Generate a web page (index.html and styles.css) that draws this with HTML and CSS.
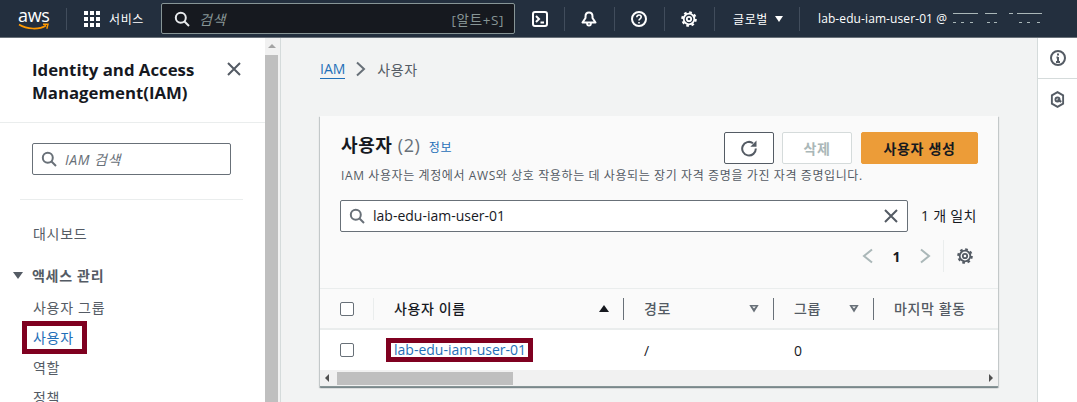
FILE: index.html
```html
<!DOCTYPE html>
<html lang="ko">
<head>
    <meta charset="UTF-8">
    <meta name="viewport" content="width=device-width, initial-scale=1.0">
    <title>IAM 사용자</title>
    <link rel="stylesheet" href="styles.css">
</head>
<body>
    <header class="topbar">
        <div class="aws-logo">
            <span class="aws-text">aws</span>
            <svg class="aws-smile" width="32" height="8" viewBox="0 0 32 8"><path d="M1 1.500C9 6.500 21 7 28 2.500" fill="none" stroke="#f90" stroke-width="1.600"/><path d="M25 1.200h5l-1.200 4.500" fill="none" stroke="#f90" stroke-width="1.400"/></svg>
        </div>
        <span class="top-sep sep-logo"></span>
        <svg class="grid-icon" width="16" height="16" viewBox="0 0 16 16" fill="#fff"><rect width="4" height="4"/><rect x="6" width="4" height="4"/><rect x="12" width="4" height="4"/><rect y="6" width="4" height="4"/><rect x="6" y="6" width="4" height="4"/><rect x="12" y="6" width="4" height="4"/><rect y="12" width="4" height="4"/><rect x="6" y="12" width="4" height="4"/><rect x="12" y="12" width="4" height="4"/></svg>
        <span class="services">서비스</span>
        <div class="top-search">
            <svg width="16" height="16" viewBox="0 0 16 16" fill="none" stroke="#e9ebed" stroke-width="2"><circle cx="6.800" cy="6.800" r="5"/><path d="M10.500 10.500l4.500 4.500"/></svg>
            <span class="top-search-text">검색</span>
            <span class="top-search-key">[알트+S]</span>
        </div>
        <div class="top-icon first">
            <svg width="16" height="16" viewBox="0 0 16 16" fill="none" stroke="#fff" stroke-width="2"><rect x="1" y="1" width="14" height="14" rx="2"/><path d="M4 5l3 3-3 3M8.500 11.500H12"/></svg>
        </div>
        <div class="top-icon">
            <svg width="16" height="16" viewBox="0 0 16 16" fill="none" stroke="#fff" stroke-width="2"><path d="M8 1.500c-2.200 0-3.500 1.800-3.500 4V7L1.500 11.500h13L11.500 7V5.500c0-2.200-1.300-4-3.500-4z" stroke-linejoin="round"/><path d="M6 12c0 1.600.9 2.700 2 2.700s2-1.100 2-2.700" stroke-width="1.800"/></svg>
        </div>
        <div class="top-icon">
            <svg width="16" height="16" viewBox="0 0 16 16" fill="none" stroke="#fff" stroke-width="2"><circle cx="8" cy="8" r="7"/><path d="M5.800 6.200c0-1.300 1-2.200 2.200-2.200s2.200.9 2.200 2.100c0 1.800-2.200 1.800-2.200 3.400" stroke-width="1.600"/><path d="M8 11v1.500" stroke-width="1.600"/></svg>
        </div>
        <div class="top-icon">
            <svg width="16" height="16" viewBox="0 0 16 16" fill="none" stroke="#fff"><circle cx="8" cy="8" r="2.200" stroke-width="1.800"/><circle cx="8" cy="8" r="5.300" stroke-width="1.800"/><circle cx="8" cy="8" r="6.700" stroke-width="2.200" stroke-dasharray="2.630 2.630"/></svg>
        </div>
        <div class="region">글로벌<span class="region-caret"></span></div>
        <div class="account"><span>lab-edu-iam-user-01 @</span>
            <svg width="92" height="11" viewBox="0 0 92 11" fill="none" stroke="#aab7b8"><path d="M0 .5h25M32 .5h12M56 .5h4M64 .5h25M0 9.500h3M8 9.500h3M17 9.500h3M34 9.500h3M41 9.500h3M66 9.500h3M74 9.500h3M84 9.500h3"/></svg>
        </div>
    </header>

    <div class="layout">
        <aside class="sidebar">
            <div class="side-head">
                <h2 class="side-title">Identity and Access Management(IAM)</h2>
                <svg class="side-close" width="16" height="16" viewBox="0 0 16 16" fill="none" stroke="#545b64" stroke-width="2"><path d="M2 2l12 12M14 2L2 14"/></svg>
            </div>
            <div class="side-search-wrap">
                <div class="side-search">
                    <svg width="16" height="16" viewBox="0 0 16 16" fill="none" stroke="#687078" stroke-width="2"><circle cx="6.800" cy="6.800" r="5"/><path d="M10.500 10.500l4.500 4.500"/></svg>
                    <span class="side-search-text">IAM 검색</span>
                </div>
            </div>
            <nav class="side-nav">
                <a class="side-link dashboard">대시보드</a>
                <div class="side-group"><span class="side-caret"></span>액세스 관리</div>
                <a class="side-link">사용자 그룹</a>
                <a class="side-link"><span class="mark side-mark">사용자</span></a>
                <a class="side-link">역할</a>
                <a class="side-link">정책</a>
            </nav>
        </aside>
        <div class="v-scroll">
            <span class="v-arrow"></span>
            <span class="v-thumb"></span>
        </div>

        <main class="main">
            <div class="crumbs">
                <a class="crumb-link">IAM</a>
                <svg width="10" height="16" viewBox="0 0 10 16" fill="none" stroke="#687078" stroke-width="2"><path d="M1 1.500L8 8l-7 6.500"/></svg>
                <span class="crumb-now">사용자</span>
            </div>

            <section class="card">
                <div class="card-head">
                    <div class="card-title-box">
                        <h1 class="card-title">사용자 <span class="card-count">(2)</span> <a class="info-link">정보</a></h1>
                        <p class="card-desc">IAM 사용자는 계정에서 AWS와 상호 작용하는 데 사용되는 장기 자격 증명을 가진 자격 증명입니다.</p>
                    </div>
                    <div class="card-actions">
                        <button class="btn btn-refresh">
                            <svg width="18" height="18" viewBox="0 0 18 18" fill="none" stroke="#545b64" stroke-width="2"><path d="M15.800 9.500A6.800 6.800 0 1 1 13 4.200"/><path d="M16.500 1.500v6.200h-6.200z" fill="#545b64" stroke-width="0"/></svg>
                        </button>
                        <button class="btn btn-disabled">삭제</button>
                        <button class="btn btn-primary">사용자 생성</button>
                    </div>
                </div>

                <div class="filter-row">
                    <div class="filter-box">
                        <svg width="16" height="16" viewBox="0 0 16 16" fill="none" stroke="#687078" stroke-width="2"><circle cx="6.800" cy="6.800" r="5"/><path d="M10.500 10.500l4.500 4.500"/></svg>
                        <span class="filter-text">lab-edu-iam-user-01</span>
                        <svg width="14" height="14" viewBox="0 0 14 14" fill="none" stroke="#545b64" stroke-width="2"><path d="M1 1l12 12M13 1L1 13"/></svg>
                    </div>
                    <span class="filter-count">1 개 일치</span>
                </div>

                <div class="pager">
                    <svg width="12" height="16" viewBox="0 0 12 16" fill="none" stroke="#aab7b8" stroke-width="2"><path d="M10 1.500L2 8l8 6.500"/></svg>
                    <span class="pager-num">1</span>
                    <svg width="12" height="16" viewBox="0 0 12 16" fill="none" stroke="#aab7b8" stroke-width="2"><path d="M2 1.500L10 8l-8 6.500"/></svg>
                    <span class="pager-sep"></span>
                    <svg width="16" height="16" viewBox="0 0 16 16" fill="none" stroke="#545b64"><circle cx="8" cy="8" r="2.200" stroke-width="1.800"/><circle cx="8" cy="8" r="5.300" stroke-width="1.800"/><circle cx="8" cy="8" r="6.700" stroke-width="2.200" stroke-dasharray="2.630 2.630"/></svg>
                </div>

                <div class="table">
                    <div class="row row-head">
                        <div class="cell cell-check"><span class="check"></span></div>
                        <div class="cell"><span class="th-text th-dark">사용자 이름</span><span class="sort-up"></span></div>
                        <div class="cell"><span class="th-text">경로</span><span class="sort-down"></span></div>
                        <div class="cell"><span class="th-text">그룹</span><span class="sort-down"></span></div>
                        <div class="cell cell-last"><span class="th-text">마지막 활동</span></div>
                    </div>
                    <div class="row row-body">
                        <div class="cell cell-check"><span class="check"></span></div>
                        <div class="cell"><a class="mark user-mark">lab-edu-iam-user-01</a></div>
                        <div class="cell">/</div>
                        <div class="cell">0</div>
                        <div class="cell cell-last"></div>
                    </div>
                </div>

                <div class="h-scroll">
                    <span class="h-left"></span>
                    <span class="h-thumb"></span>
                    <span class="h-right"></span>
                </div>
            </section>
        </main>

        <aside class="rail">
            <div class="rail-item">
                <svg width="16" height="16" viewBox="0 0 16 16" fill="none" stroke="#545b64" stroke-width="2"><circle cx="8" cy="8" r="7"/><path d="M8 7v5M6 12h4M6.500 7.500H8"/><path d="M8 3.500v2"/></svg>
            </div>
            <div class="rail-item">
                <svg width="15" height="17" viewBox="0 0 16 18" fill="none" stroke="#545b64" stroke-width="2"><path d="M8 1.200l6 3.400v8.800l-6 3.400-6-3.400V4.600z"/><circle cx="8" cy="9" r="2.200"/><path d="M8 9l4 2.500" stroke-width="2.400"/></svg>
            </div>
        </aside>
    </div>
</body>
</html>
```

FILE: styles.css
```css
* {
    box-sizing: border-box;
}

html, body {
    height: 100%;
}

body {
    margin: 0;
    overflow: hidden;
    font-family: "Open Sans", "Noto Sans CJK KR", sans-serif;
    font-size: 14px;
    color: #16191f;
    background-color: #f2f3f3;
}

h1, h2, p {
    margin: 0;
}

/* top navigation */
.topbar {
    display: flex;
    align-items: center;
    height: 38px;
    padding-left: 18px;
    background-color: #232f3e;
    border-bottom: 1px solid #687078;
    color: #fff;
    font-size: 12px;
}

.aws-logo {
    position: relative;
    width: 31px;
    height: 28px;
}

.aws-text {
    display: block;
    font-size: 18px;
    line-height: 20px;
    letter-spacing: -0.3px;
}

.aws-smile {
    position: absolute;
    left: 0;
    top: 18px;
}

.top-sep {
    width: 1px;
    height: 22px;
    background-color: #414d5c;
}

.sep-logo {
    margin-left: 17px;
}

.grid-icon {
    margin-left: 17px;
}

.services {
    width: 52px;
    margin-left: 9px;
    letter-spacing: 0.6px;
}

.top-search {
    display: flex;
    align-items: center;
    width: 354px;
    height: 31px;
    padding: 0 10px 0 12px;
    background-color: #16191f;
    border: 1px solid #879596;
    border-radius: 2px;
}

.top-search-text {
    margin-left: 9px;
    font-style: italic;
    font-size: 14px;
    letter-spacing: 0.5px;
    color: #879596;
}

.top-search-key {
    margin-left: auto;
    font-size: 13.500px;
    letter-spacing: 0.6px;
    color: #879596;
}

.top-icon {
    display: flex;
    align-items: center;
    justify-content: center;
    width: 51px;
    height: 24px;
    margin-left: -1px;
    border-right: 1px solid #414d5c;
}

.top-icon.first {
    width: 50px;
    margin-left: 0;
}

.region {
    display: flex;
    align-items: center;
    width: 85px;
    height: 24px;
    padding-left: 18px;
    border-right: 1px solid #414d5c;
    letter-spacing: 0.6px;
}

.region-caret {
    margin-left: 7px;
    border-left: 4.500px solid transparent;
    border-right: 4.500px solid transparent;
    border-top: 6px solid #fff;
}

.account {
    display: flex;
    align-items: center;
    gap: 6px;
    margin-left: 18px;
    letter-spacing: 0.1px;
    white-space: nowrap;
}

/* page columns */
.layout {
    display: flex;
    height: 364px;
}

.sidebar {
    flex: 0 0 265px;
    background-color: #fff;
    overflow: hidden;
}

.side-head {
    display: flex;
    justify-content: space-between;
    height: 85px;
    padding: 20px 23px 0 32px;
    border-bottom: 1px solid #eaeded;
}

.side-title {
    width: 180px;
    font-size: 16.800px;
    line-height: 23px;
    font-weight: 700;
}

.side-close {
    margin-top: 3px;
}

.side-search-wrap {
    margin: 0 22px 0 20px;
    padding: 20px 12px 24px;
    border-bottom: 1px solid #eaeded;
}

.side-search {
    display: flex;
    align-items: center;
    height: 32px;
    padding-left: 8px;
    background-color: #fff;
    border: 1px solid #687078;
    border-radius: 2px;
}

.side-search-text {
    margin-left: 8px;
    font-style: italic;
    font-size: 14px;
    letter-spacing: 0.5px;
    color: #687078;
}

.side-nav {
    padding-top: 19px;
}

.side-link {
    display: flow-root;
    height: 30px;
    padding-left: 33px;
    font-size: 14px;
    line-height: 30px;
    letter-spacing: 0.7px;
    color: #545b64;
}

.dashboard {
    margin-bottom: 11px;
}

.side-group {
    display: flex;
    align-items: center;
    height: 30px;
    margin-bottom: 3px;
    padding-left: 13px;
    font-size: 14px;
    font-weight: 700;
    letter-spacing: 0.7px;
    color: #545b64;
}

.side-caret {
    margin-right: 9px;
    border-left: 5px solid transparent;
    border-right: 5px solid transparent;
    border-top: 7px solid #545b64;
}

/* red annotation boxes */
.mark {
    display: block;
    width: fit-content;
    background-color: #fff;
    color: #1f6fb8;
    outline: 5px solid #7f0020;
}

.side-mark {
    height: 23px;
    margin: 3px 0 0 -6px;
    padding: 0 8px 0 6px;
    line-height: 23px;
}

.user-mark {
    height: 14px;
    margin-left: -3px;
    padding: 0 2px 0 3px;
    line-height: 14px;
}

.v-scroll {
    display: flex;
    flex-direction: column;
    align-items: center;
    flex: 0 0 16px;
    padding-right: 2px;
    background-color: #f1f1f1;
    border-right: 1px solid #d5dbdb;
}

.v-arrow {
    margin-top: 6px;
    border-left: 4px solid transparent;
    border-right: 4px solid transparent;
    border-bottom: 4px solid #a3a3a3;
}

.v-thumb {
    width: 13px;
    flex: 1;
    margin-top: 7px;
    background-color: #bfbfbf;
}

/* main area */
.main {
    flex: 1;
    min-width: 0;
    padding: 0 39px;
}

.crumbs {
    display: flex;
    align-items: center;
    gap: 11px;
    height: 78px;
    padding-bottom: 17px;
    font-size: 14px;
    color: #545b64;
}

.crumb-link {
    color: #1f6fb8;
    border-bottom: 1px solid #1f6fb8;
}

.crumb-now {
    letter-spacing: 0.6px;
}

.card {
    background-color: #fafafa;
    box-shadow: 0 1px 1px 0 rgba(0, 28, 36, 0.3), 1px 1px 1px 0 rgba(0, 28, 36, 0.15), -1px 1px 1px 0 rgba(0, 28, 36, 0.15);
}

.card-head {
    display: flex;
    padding: 16px 20px 0 21px;
}

.card-title-box {
    flex: 1;
    min-width: 0;
}

.card-title {
    font-size: 18px;
    line-height: 26px;
    font-weight: 700;
    letter-spacing: 0.6px;
}

.card-count {
    font-weight: 400;
    color: #687078;
}

.info-link {
    margin-left: 3px;
    font-size: 12px;
    font-weight: 400;
    color: #1f6fb8;
}

.card-desc {
    margin-top: 6px;
    font-size: 12px;
    line-height: 18px;
    letter-spacing: 0.6px;
    color: #545b64;
    white-space: nowrap;
}

.card-actions {
    display: flex;
    flex: none;
    gap: 8px;
}

.btn {
    height: 32px;
    border-radius: 2px;
    font-family: inherit;
    font-size: 14px;
    font-weight: 700;
    letter-spacing: 0.7px;
}

.btn-refresh {
    display: flex;
    align-items: center;
    justify-content: center;
    width: 50px;
    background-color: #fff;
    border: 1px solid #545b64;
}

.btn-disabled {
    width: 70px;
    background-color: #fff;
    border: 1px solid #d5dbdb;
    color: #aab7b8;
}

.btn-primary {
    width: 117px;
    margin-left: 1px;
    background-color: #ec9c38;
    border: 1px solid #ec9c38;
    color: #16191f;
}

.filter-row {
    display: flex;
    align-items: center;
    margin-top: 15px;
    padding: 0 21px 0 20px;
}

.filter-box {
    display: flex;
    flex: none;
    align-items: center;
    width: 568px;
    height: 32px;
    padding: 0 9px 0 8px;
    background-color: #fff;
    border: 1px solid #687078;
    border-radius: 2px;
}

.filter-text {
    flex: 1;
    margin-left: 8px;
    margin-bottom: 2px;
    font-size: 14px;
}

.filter-count {
    margin-left: 13px;
    margin-bottom: 2px;
    font-size: 14px;
    letter-spacing: 0.3px;
    white-space: nowrap;
}

.pager {
    display: flex;
    align-items: center;
    justify-content: flex-end;
    height: 32px;
    margin-top: 8px;
    padding-right: 25px;
}

.pager-num {
    width: 45px;
    text-align: center;
    font-weight: 700;
}

.pager-sep {
    width: 1px;
    height: 32px;
    margin: 0 13px 0 12px;
    background-color: #eaeded;
}

.table {
    margin-top: 16px;
}

.row {
    display: grid;
    grid-template-columns: 54px 250px 150px 100px 124px;
    align-items: center;
    font-size: 14px;
}

.row-head {
    height: 42px;
    border-top: 1px solid #eaeded;
    border-bottom: 2px solid #eaeded;
    font-weight: 500;
    letter-spacing: 0.6px;
    color: #545b64;
}

.row-body {
    height: 40px;
    background-color: #fff;
}

.cell {
    display: flex;
    align-items: center;
    justify-content: space-between;
    height: 22px;
    padding: 0 14px 0 20px;
    border-right: 1px solid transparent;
    white-space: nowrap;
}

.row-head .cell {
    border-right-color: #687078;
}

.row-head .cell-check {
    border-right-color: #eaeded;
}

.row-head .cell-last {
    border-right: 0;
}

.th-text {
    margin-bottom: 2px;
}

.th-dark {
    color: #16191f;
}

.check {
    display: block;
    width: 14px;
    height: 14px;
    background-color: #fff;
    border: 1px solid #687078;
    border-radius: 2px;
}

.sort-up {
    border-left: 5px solid transparent;
    border-right: 5px solid transparent;
    border-bottom: 7px solid #16191f;
}

.sort-down {
    width: 10px;
    height: 8px;
    background-color: #687078;
    clip-path: polygon(0 0, 100% 0, 50% 100%, 0 0, 32% 25%, 50% 50%, 68% 25%, 32% 25%);
}

.h-scroll {
    display: flex;
    align-items: center;
    height: 17px;
    background-color: #f1f1f1;
    border-bottom: 1px solid #879596;
}

.h-left {
    margin-left: 5px;
    border-top: 4px solid transparent;
    border-bottom: 4px solid transparent;
    border-right: 4px solid #505050;
}

.h-thumb {
    width: 176px;
    height: 13px;
    margin-left: 8px;
    background-color: #bfbfbf;
}

.h-right {
    margin-left: auto;
    margin-right: 5px;
    border-top: 4px solid transparent;
    border-bottom: 4px solid transparent;
    border-left: 4px solid #505050;
}

/* right icons */
.rail {
    flex: 0 0 40px;
    background-color: #fff;
    border-left: 1px solid #d5dbdb;
}

.rail-item {
    display: flex;
    align-items: center;
    justify-content: center;
    height: 41px;
    border-bottom: 1px solid #d5dbdb;
}

.rail-item:last-child {
    border-bottom: 0;
}
```
